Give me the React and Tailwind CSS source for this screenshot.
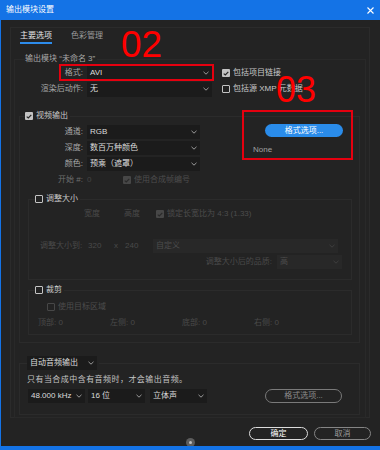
import React from 'react'

function Chevron({ color = '#9a9a9a' }) {
  return (
    <svg width="6" height="4" viewBox="0 0 6 4" fill="none" className="shrink-0">
      <path d="M0.5 0.8 L3 3.2 L5.5 0.8" stroke={color} strokeWidth="1" />
    </svg>
  )
}

function Box({ checked, disabled }) {
  const cls = checked
    ? disabled ? 'bg-[#474747]' : 'bg-[#c4c4c4]'
    : disabled ? 'border border-[#474747]' : 'border-[1.5px] border-[#c4c4c4]'
  return (
    <span className={`flex h-[8px] w-[8px] shrink-0 items-center justify-center rounded-[1px] ${cls}`}>
      {checked && (
        <svg width="6" height="5" viewBox="0 0 6 5" fill="none">
          <path d="M0.7 2.6 L2.3 4 L5.3 0.8" stroke={disabled ? '#2a2a2a' : '#262626'} strokeWidth="1.2" />
        </svg>
      )}
    </span>
  )
}

function Check({ checked, disabled, label, className = '' }) {
  return (
    <div className={`flex h-[10px] items-center ${className}`}>
      <Box checked={checked} disabled={disabled} />
      <span className={`ml-[3px] whitespace-nowrap ${disabled ? 'text-[#4d4d4d]' : 'text-[#c8c8c8]'}`}>{label}</span>
    </div>
  )
}

function Select({ value, className = '', disabled }) {
  return (
    <div className={`flex h-[14px] items-center justify-between pl-[3px] pr-[3px] ${disabled ? 'bg-[#282828] text-[#4d4d4d]' : 'bg-[#1b1b1b] text-[#dcdcdc]'} ${className}`}>
      <span className="whitespace-nowrap">{value}</span>
      <Chevron color={disabled ? '#3e3e3e' : '#9a9a9a'} />
    </div>
  )
}

function Row({ label, children, labelW = 'w-[65px]', dim }) {
  return (
    <div className="flex h-[16px] items-center">
      <span className={`${labelW} shrink-0 pr-[2px] text-right whitespace-nowrap ${dim ? 'text-[#6e6e6e]' : 'text-[#a8a8a8]'}`}>{label}</span>
      {children}
    </div>
  )
}

export default function App() {
  return (
    <div className="relative flex h-[450px] w-[380px] flex-col overflow-hidden border-b-[4px] border-l border-[#1473e6] bg-[#232323] font-['Liberation_Sans','Noto_Sans_CJK_SC',sans-serif] text-[8px] leading-[10px] text-[#b8b8b8]">
      {/* title bar */}
      <div className="flex h-[20px] shrink-0 items-center justify-between bg-[#1473e6] pl-[5px] pr-[6px] text-white">
        <span>输出模块设置</span>
        <svg width="7" height="7" viewBox="0 0 7 7">
          <path d="M0.5 0.5 L6.5 6.5 M6.5 0.5 L0.5 6.5" stroke="#fff" strokeWidth="1.1" />
        </svg>
      </div>

      {/* tab frame */}
      <div className="ml-[9px] mt-[7px] h-[391px] w-[360px] shrink-0 border border-[#2b2b2b]">
        <div className="flex pl-[9px] pt-[2px]">
          <span className="border-b-2 border-[#2d8ceb] leading-[12px] text-[#e6e6e6]">主要选项</span>
          <span className="ml-[19px] leading-[12px] text-[#9c9c9c]">色彩管理</span>
        </div>

        <fieldset className="ml-[3px] mt-[9px] w-[352px] border border-[#292929] pb-[2px]">
          <legend className="ml-[10px] pr-[2px] leading-[12px] text-[#a8a8a8]">输出模块 “未命名 3”</legend>

          <Row label="格式:" labelW="w-[70px]">
            <Select value="AVI" className="ml-[2px] h-[15px] w-[125px]" />
            <Check checked label="包括项目链接" className="ml-[10px]" />
          </Row>
          <Row label="渲染后动作:" labelW="w-[70px]">
            <Select value="无" className="ml-[2px] h-[15px] w-[125px]" />
            <Check label="包括源 XMP 元数据" className="ml-[10px]" />
          </Row>

          {/* video */}
          <fieldset className="ml-[4px] mt-[14px] w-[341px] border border-[#2b2b2b] pb-[7px]">
            <legend className="ml-[5px] pr-[2px]">
              <Check checked label="视频输出" />
            </legend>
            <div className="flex">
              <div className="mt-[3px] w-[180px] shrink-0">
                <Row label="通道:">
                  <Select value="RGB" className="ml-[2px] w-[113px]" />
                </Row>
                <Row label="深度:">
                  <Select value="数百万种颜色" className="ml-[2px] w-[113px]" />
                </Row>
                <Row label="颜色:">
                  <Select value="预乘（遮罩）" className="ml-[2px] w-[113px]" />
                </Row>
                <Row label="开始 #:" dim>
                  <span className="ml-[2px] w-[36px] text-[#444]">0</span>
                  <Check checked disabled label="使用合成帧编号" />
                </Row>
              </div>
              <div className="ml-[53px] mt-[3px] flex flex-col">
                <div className="ml-[12px] flex h-[13px] w-[78px] items-center justify-center rounded-full bg-[#2a8cea] text-white">格式选项...</div>
                <span className="mt-[8px] text-[#a0a0a0]">None</span>
              </div>
            </div>

            {/* resize */}
            <fieldset className="ml-[8px] mt-[6px] w-[324px] border border-[#2b2b2b] pb-[9px]">
              <legend className="ml-[6px] pr-[2px]">
                <Check label="调整大小" />
              </legend>
              <div className="mt-[4px] flex h-[12px] items-center pl-[55px] text-[#4a4a4a]">
                <span>宽度</span>
                <span className="ml-[24px]">高度</span>
                <Check checked disabled label="锁定长宽比为 4:3 (1.33)" className="ml-[16px]" />
              </div>
              <div className="mt-[18px] flex h-[16px] items-center pl-[11px] text-[#4a4a4a]">
                <span className="w-[48px] whitespace-nowrap">调整大小到:</span>
                <span className="w-[26px]">320</span>
                <span className="w-[11px]">x</span>
                <span className="w-[28px]">240</span>
                <Select disabled value="自定义" className="w-[185px]" />
              </div>
              <div className="flex h-[16px] items-center justify-end pr-[9px] text-[#4a4a4a]">
                <span className="whitespace-nowrap">调整大小后的品质:</span>
                <Select disabled value="高" className="ml-[5px] w-[65px]" />
              </div>
            </fieldset>

            {/* crop */}
            <fieldset className="ml-[8px] mt-[5px] w-[324px] border border-[#2b2b2b] pb-[6px]">
              <legend className="ml-[6px] pr-[2px]">
                <Check label="裁剪" />
              </legend>
              <Check disabled label="使用目标区域" className="ml-[18px] mt-[7px]" />
              <div className="mt-[6px] flex h-[10px] items-center pl-[9px] text-[#4a4a4a]">
                <span className="w-[72px]">顶部: 0</span>
                <span className="w-[72px]">左侧: 0</span>
                <span className="w-[72px]">底部: 0</span>
                <span className="w-[72px]">右侧: 0</span>
              </div>
            </fieldset>
          </fieldset>

          {/* audio */}
          <fieldset className="ml-[4px] mt-[13px] w-[341px] border border-[#2b2b2b] pb-[11px]">
            <legend className="ml-[7px] pr-[2px]">
              <Select value="自动音频输出" className="h-[12px] w-[70px]" />
            </legend>
            <div className="mt-[5px] pl-[7px] tracking-[0.45px] text-[#c4c4c4]">只有当合成中含有音频时，才会输出音频。</div>
            <div className="mt-[4px] flex h-[14px] items-center">
              <Select value="48.000 kHz" className="ml-[8px] h-[13px] w-[57px]" />
              <Select value="16 位" className="ml-[3px] h-[13px] w-[57px]" />
              <Select value="立体声" className="ml-[5px] h-[13px] w-[57px]" />
              <div className="ml-[58px] flex h-[14px] w-[77px] items-center justify-center rounded-full border-[1.5px] border-[#7a7a7a] text-[#8c8c8c]">格式选项...</div>
            </div>
          </fieldset>
        </fieldset>
      </div>

      {/* buttons */}
      <div className="mt-[9px] flex justify-end gap-[6px] pr-[9px]">
        <div className="flex h-[13px] w-[59px] items-center justify-center rounded-full border-[1.5px] border-[#dcdcdc] text-white">确定</div>
        <div className="flex h-[13px] w-[57px] items-center justify-center rounded-full border-[1.5px] border-[#858585] text-[#9a9a9a]">取消</div>
      </div>

      {/* watermark */}
      <div className="absolute left-[185px] top-[438px] flex h-[9px] w-[9px] items-center justify-center rounded-full bg-[#5c5c5c]">
        <span className="h-[3px] w-[3px] rounded-full bg-[#bdbdbd]" />
      </div>

      {/* annotations */}
      <div className="absolute left-[58px] top-[64px] h-[17px] w-[155px] border-2 border-[#e5000f]" />
      <div className="absolute left-[241px] top-[110px] h-[50px] w-[111px] border-2 border-[#e5000f]" />
      <span className="absolute left-[120px] top-[26px] font-['Liberation_Sans',sans-serif] text-[37px] leading-none text-[#ff0000]">02</span>
      <span className="absolute left-[275px] top-[72px] font-['Liberation_Sans',sans-serif] text-[36px] leading-none text-[#ff0000]">03</span>
    </div>
  )
}
